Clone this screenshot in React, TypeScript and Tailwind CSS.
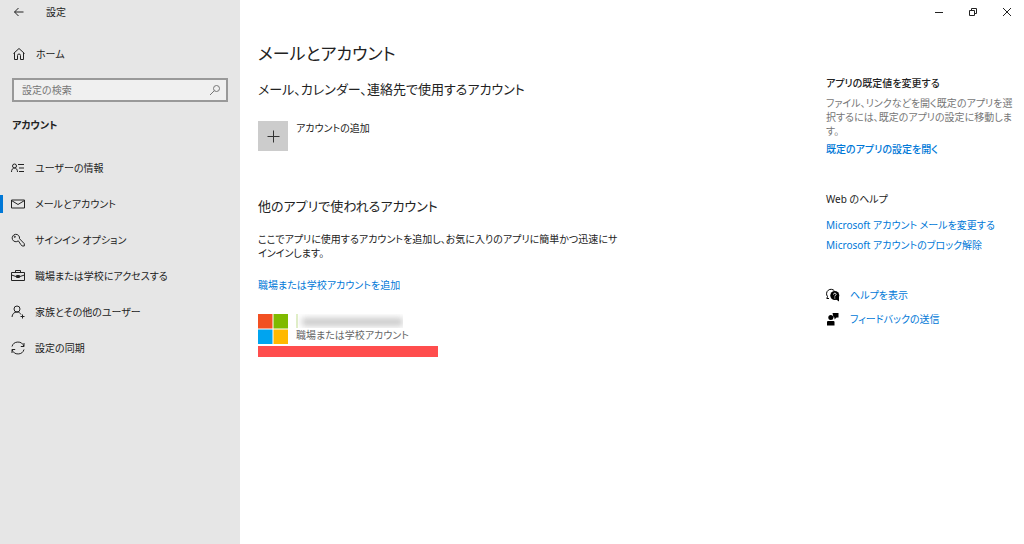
import type { ReactNode } from 'react';

const navItems = [
  { label: 'ユーザーの情報', icon: 'info' },
  { label: 'メールとアカウント', icon: 'mail', active: true },
  { label: 'サインイン オプション', icon: 'key' },
  { label: '職場または学校にアクセスする', icon: 'briefcase' },
  { label: '家族とその他のユーザー', icon: 'family' },
  { label: '設定の同期', icon: 'sync' },
];

const iconPaths: Record<string, ReactNode> = {
  back: <path d="M11.500 7H2.500M6.500 3 2.500 7l4 4" />,
  home: <path d="M1.500 6.500 7 1.500l5.500 5M2.500 6v6.500h3V8.500Q5.500 7 7 7t1.500 1.500v4h3V6" />,
  search: (
    <>
      <circle cx="8.500" cy="5.500" r="3" />
      <path d="M6.300 7.700 2 12" />
    </>
  ),
  info: (
    <>
      <circle cx="3.500" cy="5" r="2" />
      <path d="M.5 11c0-2.500 1.200-4 3-4s3 1.500 3 4M7 3.500h6M8 7h5M8 10.500h5" />
    </>
  ),
  mail: <path d="M.5 3h13v8H.5zM.5 3.500 7 7.500l6.500-4" />,
  key: (
    <>
      <path d="M7.300 7.800a3.700 3.700 0 1 1 1.200-2.100l4.800 5V13h-2.100L9.800 11.500z" />
      <circle cx="3.800" cy="3.800" r=".6" />
    </>
  ),
  briefcase: <path d="M.5 3.500h13v8H.5zM4.500 3.500v-2h5v2M.5 6 5 7.500h4L13.500 6M5.500 6.500h3v2h-3z" />,
  family: (
    <>
      <circle cx="6" cy="4" r="3" />
      <path d="M1 12c.3-3 2-5 5-5 2 0 3.200 1 4 2.500M11.500 9.500v4M9.500 11.500h4" />
    </>
  ),
  sync: <path d="M1 5.500a6.200 6.200 0 0 1 11.800-.3M13 2v3.500H9.800M13 8.500a6.200 6.200 0 0 1-11.800.3M1 12V8.500h3.200" />,
};

function Icon({ name, className = '' }: { name: string; className?: string }) {
  return (
    <svg viewBox="0 0 14 14" className={`h-3.5 w-3.5 shrink-0 fill-none stroke-current ${className}`} aria-hidden="true">
      {iconPaths[name]}
    </svg>
  );
}

function WindowControls() {
  return (
    <div className="flex justify-end">
      <button aria-label="最小化" className="flex h-6 w-[34px] items-center justify-center">
        <svg viewBox="0 0 10 10" className="h-2.5 w-2.5 fill-none stroke-current"><path d="M1 5.500h8" /></svg>
      </button>
      <button aria-label="元に戻す" className="flex h-6 w-[34px] items-center justify-center">
        <svg viewBox="0 0 10 10" className="h-2.5 w-2.5 fill-none stroke-current"><path d="M1.500 3.500h5v5h-5zM3.500 3V1.500h5v5H7" /></svg>
      </button>
      <button aria-label="閉じる" className="flex h-6 w-[34px] items-center justify-center">
        <svg viewBox="0 0 10 10" className="h-2.5 w-2.5 fill-none stroke-current"><path d="m1 1 8 8M9 1 1 9" /></svg>
      </button>
    </div>
  );
}

function Sidebar() {
  return (
    <aside className="w-60 shrink-0 bg-[#e6e6e6]">
      <div className="flex h-6 items-center gap-5 pl-3">
        <button aria-label="戻る"><Icon name="back" /></button>
        <span>設定</span>
      </div>
      <a href="#home" className="mt-5 flex h-5 items-center gap-2.5 pl-3">
        <Icon name="home" />
        ホーム
      </a>
      <div className="mx-3 mt-3.5 flex h-6 items-center border-2 border-[#999] bg-[#f0f0f0] pr-1 pl-2 text-[#767676]">
        <input aria-label="設定の検索" placeholder="設定の検索" className="min-w-0 flex-1 bg-transparent outline-none placeholder:text-[#767676]" />
        <Icon name="search" />
      </div>
      <h2 className="mt-4 pl-3 font-bold">アカウント</h2>
      <nav className="mt-[18px]">
        {navItems.map((item) => (
          <a key={item.icon} href={`#${item.icon}`} className="flex h-9 items-center">
            <span className={`h-[18px] w-[3px] ${item.active ? 'bg-[#0078d7]' : ''}`} />
            <Icon name={item.icon} className="mr-2.5 ml-2" />
            {item.label}
          </a>
        ))}
      </nav>
    </aside>
  );
}

function Accounts() {
  return (
    <main className="min-w-0 flex-1 pt-4 pl-[18px]">
      <h1 className="text-[17px] leading-7">メールとアカウント</h1>
      <h2 className="mt-[11px] text-[13px] leading-5">メール、カレンダー、連絡先で使用するアカウント</h2>
      <button className="mt-[22px] flex gap-2 text-left">
        <span className="flex h-[30px] w-[30px] items-center justify-center bg-[#ccc]">
          <svg viewBox="0 0 14 14" className="h-3.5 w-3.5 stroke-[#333]"><path d="M7.500 1.500v12M1.500 7.500h12" /></svg>
        </span>
        アカウントの追加
      </button>

      <h2 className="mt-[45px] text-[13px] leading-5">他のアプリで使われるアカウント</h2>
      <p className="mt-4">
        ここでアプリに使用するアカウントを追加し、お気に入りのアプリに簡単かつ迅速にサ
        <br />
        インインします。
      </p>
      <a href="#add-work" className="mt-[18px] block text-[#0078d7]">職場または学校アカウントを追加</a>
      <div className="mt-[22px] flex gap-2">
        <svg viewBox="0 0 30 30" className="h-[30px] w-[30px]" aria-hidden="true">
          <path fill="#f25022" d="M0 0h14.500v14.500H0z" />
          <path fill="#7fba00" d="M15.500 0H30v14.500H15.500z" />
          <path fill="#00a4ef" d="M0 15.500h14.500V30H0z" />
          <path fill="#ffb900" d="M15.500 15.500H30V30H15.500z" />
        </svg>
        <div>
          <div className="flex h-3.5 w-[107px] overflow-hidden">
            <span className="w-0.5 bg-[#e1efc8]" />
            <span className="mt-1 ml-1 h-2 flex-1 bg-[#c8c8c8] blur-[3px]" />
          </div>
          <p className="text-[#666]">職場または学校アカウント</p>
        </div>
      </div>
      <div className="mt-0.5 h-[11px] w-[180px] bg-[#ff4d4d]" />
    </main>
  );
}

function RelatedLinks() {
  return (
    <aside className="w-[198px] shrink-0 pt-[52px] text-[#0078d7]">
      <h3 className="font-medium text-[#222]">アプリの既定値を変更する</h3>
      <p className="mt-1.5 text-[#767676]">
        ファイル、リンクなどを開く既定のアプリを選
        <br />
        択するには、既定のアプリの設定に移動しま
        <br />
        す。
      </p>
      <a href="#defaults" className="mt-1 block font-medium">既定のアプリの設定を開く</a>
      <h3 className="mt-9 text-[#222]">Web のヘルプ</h3>
      <a href="#change-mail" className="mt-3 block whitespace-nowrap">Microsoft アカウント メールを変更する</a>
      <a href="#unblock" className="mt-1.5 block whitespace-nowrap">Microsoft アカウントのブロック解除</a>
      <a href="#help" className="mt-9 flex items-center gap-2.5">
        <svg viewBox="0 0 14 14" className="h-3.5 w-3.5 text-black" aria-hidden="true">
          <path fill="none" stroke="currentColor" d="M3 10.500H.8L1.500 8.500A4 4 0 1 1 8.500 3" />
          <circle cx="8.800" cy="7.500" r="4.500" fill="currentColor" />
          <path d="m9.500 11 3.500 2.500V8z" fill="currentColor" />
          <path fill="none" stroke="white" d="M7.500 6.500c0-1.800 2.800-1.600 2.600 0-.1.800-1.300.9-1.300 2M8.800 9.500v1" />
        </svg>
        ヘルプを表示
      </a>
      <a href="#feedback" className="mt-2.5 flex items-center gap-2.5">
        <svg viewBox="0 0 14 14" className="h-3.5 w-3.5 fill-black" aria-hidden="true">
          <circle cx="4.800" cy="5.500" r="2.500" />
          <path d="M1 13.500V10Q1 9 2 9h5.500q1 0 1 1v3.500zM6.500 1H12.500v4.500H10.500L8.500 7.500V5.500H7.500z" />
        </svg>
        フィードバックの送信
      </a>
    </aside>
  );
}

export default function App() {
  return (
    <div className="flex min-h-screen bg-white font-['Noto_Sans','Noto_Sans_CJK_JP',sans-serif] text-[10px] leading-[14px] text-[#222] [font-feature-settings:'palt']">
      <Sidebar />
      <div className="min-w-0 flex-1">
        <WindowControls />
        <div className="flex">
          <Accounts />
          <RelatedLinks />
        </div>
      </div>
    </div>
  );
}
